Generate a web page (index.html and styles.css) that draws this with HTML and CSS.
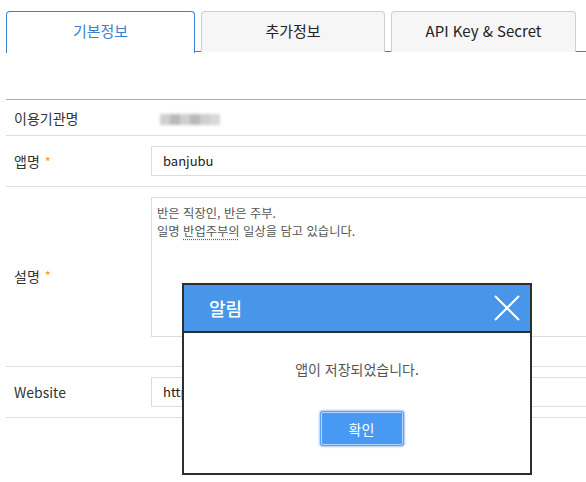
FILE: index.html
```html
<!DOCTYPE html>
<html lang="ko">
<head>
<meta charset="utf-8">
<link rel="stylesheet" href="styles.css">
</head>
<body>
<div class="page">
  <div class="tabs">
    <div class="tab active">기본정보</div>
    <div class="tab">추가정보</div>
    <div class="tab">API Key &amp; Secret</div>
  </div>
  <div class="form">
    <div class="row r1">
      <div class="label">이용기관명</div>
      <div class="value"><span class="blur"><i></i><i class="d"></i><i></i><i class="d"></i><i></i><i class="l"></i></span></div>
    </div>
    <div class="row r2">
      <div class="label">앱명<span class="req">*</span></div>
      <div class="value"><div class="input">banjubu</div></div>
    </div>
    <div class="row r3">
      <div class="label">설명<span class="req">*</span></div>
      <div class="value"><div class="textarea">반은 직장인, 반은 주부.<br>일명 <span class="spell">반업주부의</span> 일상을 담고 있습니다.</div></div>
    </div>
    <div class="row r4">
      <div class="label">Website</div>
      <div class="value"><div class="input">https://banjubu.tistory.com</div></div>
    </div>
  </div>
  <div class="dialog">
    <div class="dhead">
      <span class="dtitle">알림</span>
      <svg class="close" width="26" height="26" viewBox="0 0 26 26"><path d="M1 1L25 25M25 1L1 25" stroke="#fff" stroke-width="2" fill="none"/></svg>
    </div>
    <div class="dbody">
      <p class="msg">앱이 저장되었습니다.</p>
      <button class="ok">확인</button>
    </div>
  </div>
</div>
</body>
</html>
```
FILE: styles.css
```css
* { box-sizing: border-box; }
html, body { margin: 0; padding: 0; background: #fff; }
body { font-family: "Noto Sans CJK KR", "Noto Sans", sans-serif; color: #333; width: 586px; height: 482px; overflow: hidden; }
.page { position: relative; padding: 11px 0 0 6px; height: 482px; }
.tabs { display: flex; gap: 6px; border-bottom: 1px solid #3a7fd0; height: 41px; }
.tab { height: 41px; border: 1px solid #cfcfcf; border-bottom: none; border-radius: 4px 4px 0 0; background: #f6f6f6; font-size: 15px; color: #222; display: flex; align-items: center; justify-content: center; padding-bottom: 3px; }
.tab:nth-child(1) { width: 189px; }
.tab:nth-child(2) { width: 184px; }
.tab:nth-child(3) { width: 185px; }
.tab.active { background: #fff; border-color: #3a7fd0; color: #3a7fd0; height: 42px; margin-bottom: -1px; padding-bottom: 4px; }
.form { margin-top: 47px; border-top: 1px solid #acacac; }
.row { display: flex; border-bottom: 1px solid #dedede; align-items: center; }
.label { width: 145px; padding-left: 8px; font-size: 14px; color: #333; }
.req { color: #f0a030; font-size: 13px; margin-left: 5px; }
.value { flex: 1; }
.r1 { height: 36px; }
.r2, .r4 { height: 51px; }
.r3 { height: 180px; align-items: stretch; }
.r3 .label { display: flex; align-items: center; padding-bottom: 2px; }
.r3 .value { padding-top: 10px; }
.input { height: 30px; border: 1px solid #dcdcdc; border-right: none; font-size: 13px; color: #222; padding-left: 11px; line-height: 28px; }
.textarea { height: 140px; border: 1px solid #dcdcdc; border-right: none; font-size: 12.3px; color: #555; padding: 6px 0 0 5px; line-height: 18px; }
.spell { text-decoration: underline dotted #e03030; text-underline-offset: 3px; }
.blur { display: inline-flex; filter: blur(1.5px); margin-left: 9px; }
.blur i { display: block; width: 10px; height: 11px; background: #cfcfcf; }
.blur i.d { background: #b9b9b9; }
.blur i.l { background: #d8d8d8; }
.dialog { position: absolute; left: 182px; top: 283px; width: 350px; height: 192px; border: 2px solid #2e2e2e; background: #fff; }
.dhead { height: 48px; background: #4896e9; border-bottom: 2px solid #2e2e2e; display: flex; align-items: center; justify-content: space-between; padding: 0 10px 0 25px; }
.dtitle { color: #fff; font-size: 18px; font-weight: 500; }
.close { display: block; }
.dbody { display: flex; flex-direction: column; align-items: center; }
.msg { margin: 26px 0 0; font-size: 14px; color: #555; }
.ok { margin: 33px 0 0 9px; width: 82px; height: 33px; background: #4799f3; color: #fff; font-family: inherit; font-size: 14px; border: 1px solid #b8d6fb; border-radius: 2px; box-shadow: 0 0 0 1px #5d9fee, 0 0 2px 2px #a9cbf6; }
```
